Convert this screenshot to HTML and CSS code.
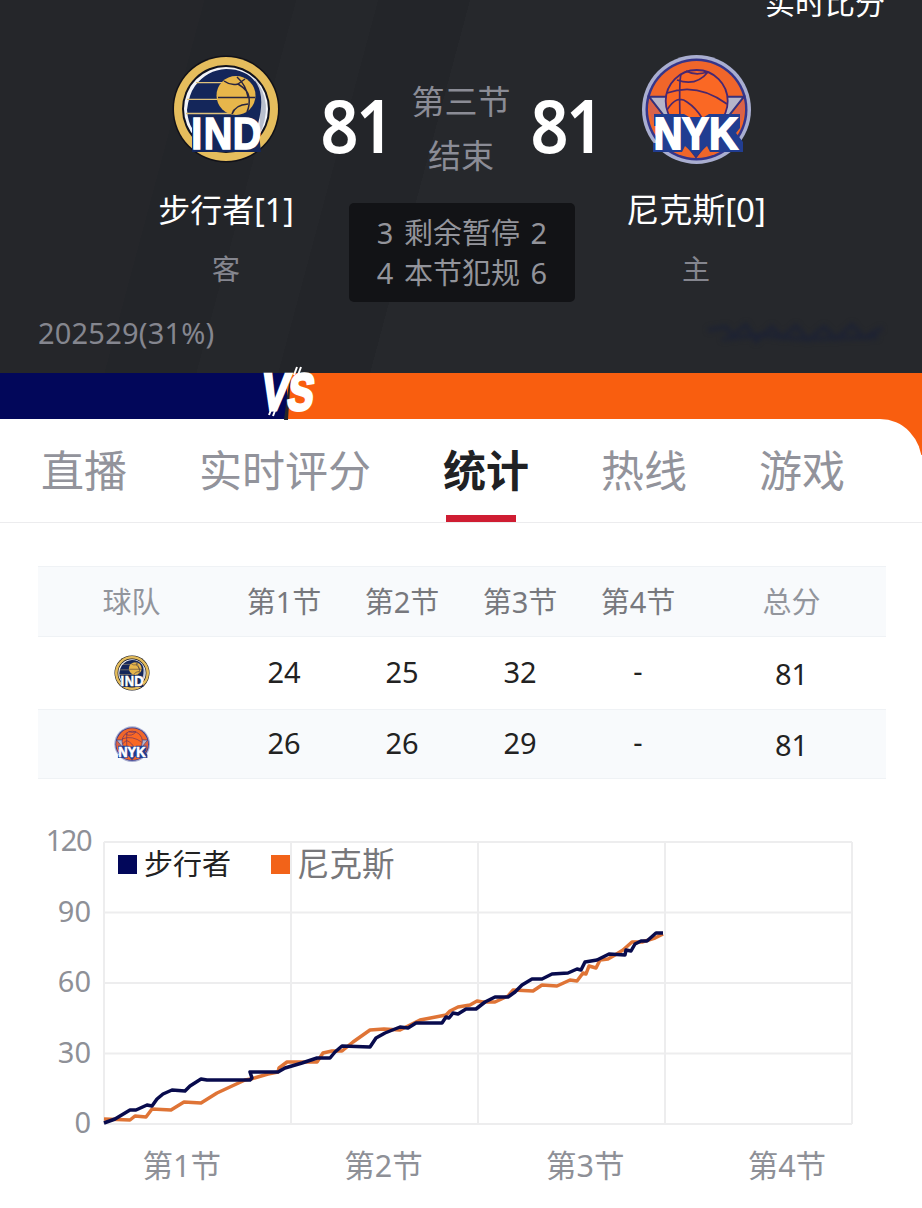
FILE: index.html
```html
<!DOCTYPE html>
<html lang="zh-Hans">
<head>
  <meta charset="UTF-8" />
  <meta name="viewport" content="width=device-width, initial-scale=1.0" />
  <title>步行者 - 尼克斯</title>
  <link rel="stylesheet" href="styles.css">
</head>
<body>
  <header class="header">
    <div class="live">实时比分</div>

    <div class="scoreboard">
      <div class="team away">
        <svg class="logo" viewBox="0 0 110 110">
          <g id="logo-ind">
            <circle cx="55" cy="55" r="53.5" fill="#111118" />
            <circle cx="55" cy="55" r="52" fill="#e5bd5d" />
            <circle cx="55" cy="55" r="44" fill="#10121e" />
            <circle cx="55" cy="55" r="42" fill="#f3f4f8" />
            <path d="M83 24 Q104 48 88 82 Q91 50 83 24Z" fill="#b9bfce" />
            <path d="M55 15 Q76 15 86 30 Q94 44 87 70 L90 98 L21 98 L21 74 Q17 68 16 56 Q18 40 24 32 Q36 16 55 15Z" fill="#14265a" />
            <path d="M25 28.7H60M16 45.3H60M15 59.5H62" stroke="#dfc27c" stroke-width="1.3" />
            <circle cx="65" cy="41.5" r="19.5" fill="#e7b64b" />
            <path d="M47 43.5H84M53 27Q60 32 67 30Q77 36 78 43Q79 51 76 58M67 30L74 25M61 60Q64 51 77 50M66 23Q75 31 77 43" fill="none" stroke="#272440" stroke-width="1.5" />
            <text transform="scale(.88 1)" x="23 37.3 70.3" y="95.5" class="mark">IND</text>
          </g>
        </svg>
        <span class="name">步行者[1]</span>
        <span class="role">客</span>
      </div>
      <div class="score">81</div>
      <div class="period"><span>第三节</span><span>结束</span></div>
      <div class="score">81</div>
      <div class="team home">
        <svg class="logo" viewBox="0 0 110 110">
          <g id="logo-nyk">
            <circle cx="55.5" cy="55.5" r="54.5" fill="#a9aed0" />
            <circle cx="55.5" cy="55.5" r="51" fill="#35358a" />
            <circle cx="55.5" cy="55.5" r="48.5" fill="#f0662a" />
            <path d="M8 42.7H103L55 103Z" fill="#b5b5ca" stroke="#36317c" stroke-width="2" />
            <path d="M8 45L29 72H14Q7 60 8 45M103 45L83 72H98Q105 60 103 45" fill="#d8624b" />
            <path d="M40 80H71L55 103Z" fill="#e46340" stroke="#36317c" stroke-width="1.5" />
            <circle cx="55.7" cy="47" r="31" fill="#fa6824" stroke="#452774" stroke-width="1.8" />
            <path d="M40 20Q38 28 39 64M45 17Q54 22 67 18M36 26Q55 33 67 18M26 39Q56 28 86 50M26 56Q36 40 46 48Q55 54 61 64" fill="none" stroke="#4b286c" stroke-width="1.7" />
            <path d="M13 60H43L48 63H63L68 60H99V74L95 79L102 88V98H69L66 92L55 102L44 92L41 98H12V89H15V72H13Z" fill="#213d91" />
            <text transform="scale(.88 1)" x="14.5 47 77.5" y="95.5" class="mark mark-nyk">NYK</text>
          </g>
        </svg>
        <span class="name">尼克斯[0]</span>
        <span class="role">主</span>
      </div>
      <div class="fouls">
        <span>3 剩余暂停 2</span>
        <span>4 本节犯规 6</span>
      </div>
    </div>

    <div class="votes">
      <span>202529(31%)</span>
      <svg class="smudge" width="192" height="32" viewBox="0 0 192 32">
        <path d="M10 13L28 10L34 19L48 8L58 24L74 10L84 21L98 9L110 23L126 10L138 22L154 8L166 21L184 11M24 22L60 18L104 22L180 20" />
      </svg>
    </div>
  </header>

  <div class="vs-bar">
    <div class="vs-away"></div>
    <svg class="vs" width="64" height="54" viewBox="0 0 64 54">
      <path d="M34 8L31 54H27L30 30Z" fill="#24262b" />
      <g transform="skewX(-8)">
        <text x="9" y="44" textLength="27" lengthAdjust="spacingAndGlyphs">V</text>
        <text x="35" y="44" textLength="26" lengthAdjust="spacingAndGlyphs">S</text>
      </g>
      <path d="M40 1L37 9M44 1L41 9M14 44L12 49M19 42L16 50" stroke="#fff" stroke-width="2" />
    </svg>
  </div>

  <div class="panel-wrap">
    <nav class="tabs">
      <a class="tab">直播</a>
      <a class="tab">实时评分</a>
      <a class="tab active">统计</a>
      <a class="tab">热线</a>
      <a class="tab">游戏</a>
    </nav>
  </div>

  <main>
    <div class="table">
      <div class="row head">
        <span class="muted">球队</span><span>第1节</span><span>第2节</span><span>第3节</span><span>第4节</span><span class="muted">总分</span>
      </div>
      <div class="row">
        <span class="cell-logo"><svg class="logo-sm" viewBox="0 0 110 110"><use href="#logo-ind" /></svg></span>
        <span>24</span><span>25</span><span>32</span><span class="none">-</span><span class="sum">81</span>
      </div>
      <div class="row shade">
        <span class="cell-logo"><svg class="logo-sm" viewBox="0 0 110 110"><use href="#logo-nyk" /></svg></span>
        <span>26</span><span>26</span><span>29</span><span class="none">-</span><span class="sum">81</span>
      </div>
    </div>

    <div class="chart">
      <div class="y-axis">
        <span>120</span><span>90</span><span>60</span><span>30</span><span>0</span>
      </div>
      <div class="plot">
        <svg width="752" height="286" viewBox="-2 -2 752 286">
          <path class="grid" d="M0 0H748M0 70.5H748M0 141H748M0 211.5H748M0 282H748M0 0V282M187 0V282M374 0V282M561 0V282M748 0V282" />
          <polyline class="line nyk" points="0,277 26,278 31,274 42,275 48,267 67,268 80,260 97,261 113,251 141,238 147,237 164,232 174,230 175,226 183,220 213,220 219,211 228,209 238,209 249,200 266,188 280,187 296,188 316,178 342,173 346,169 354,165 366,163 373,159 379,160 391,160 404,154 409,148 429,149 438,143 453,144 466,138 473,139 479,131 482,132 485,124 492,126 496,118 504,117 511,113 519,108 528,100 538,100 551,96 559,92" />
          <polyline class="line ind" points="0,281 11,277 26,268 32,268 43,263 48,264 53,257 59,252 68,248 81,249 86,244 97,237 103,238 146,238 148,236 146,230 174,230 181,226 198,221 213,216 226,216 231,210 238,204 266,205 272,196 281,191 296,185 304,186 312,181 338,181 342,175 345,176 349,171 354,172 362,167 372,167 381,160 391,155 404,155 411,150 418,143 428,137 438,137 448,132 464,131 473,127 477,128 481,120 493,118 505,112 521,113 522,108 527,109 531,102 537,99 543,99 552,91 559,91" />
        </svg>
        <div class="legend">
          <i class="dot ind"></i><span class="l-ind">步行者</span>
          <i class="dot nyk"></i><span class="l-nyk">尼克斯</span>
        </div>
      </div>
    </div>
    <div class="x-axis">
      <span>第1节</span><span>第2节</span><span>第3节</span><span>第4节</span>
    </div>
  </main>
</body>
</html>
```
FILE: styles.css
```css
* { box-sizing: border-box; }
body {
  margin: 0;
  height: 1208px;
  overflow: hidden;
  background: #fff;
  font-family: "Noto Sans", "Noto Sans CJK SC", sans-serif;
  font-size: 29px;
}
svg { display: block; }
.mark {
  font-family: "Liberation Sans", sans-serif;
  font-size: 45px;
  font-weight: bold;
  fill: #fff;
  stroke: #fff;
  stroke-width: 1.6;
}
.mark-nyk { stroke-width: 2; }

/* header */
.header {
  height: 373px;
  overflow: hidden;
  background: linear-gradient(105deg, #25262a 20%, #232529 20% 29%, #25272b 29% 37%, #232529 37% 46%, #26282c 46%);
  color: #fff;
}
.live {
  height: 54px;
  padding-right: 37px;
  margin-top: -14px;
  font-size: 30px;
  line-height: 34px;
  text-align: right;
}
.scoreboard {
  display: grid;
  grid-template-columns: 176px 84px 126px 84px 176px;
  grid-template-rows: 149px 99px;
  margin-top: 14px;
  padding-left: 138px;
  height: 248px;
}
.team {
  grid-row: 1 / 3;
  display: flex;
  flex-direction: column;
  align-items: center;
}
.away { grid-column: 1; }
.home { grid-column: 5; }
.logo {
  width: 110px;
  height: 110px;
}
.name {
  margin-top: 22px;
  font-size: 32px;
  line-height: 48px;
  white-space: nowrap;
}
.home .name { font-size: 33px; }
.role {
  margin-top: 15px;
  font-size: 28px;
  line-height: 40px;
  color: #85868f;
}
.score {
  height: 149px;
  font-size: 74px;
  font-weight: 600;
  line-height: 142px;
  text-align: center;
  letter-spacing: -3px;
  transform: scaleX(.9);
}
.period {
  display: flex;
  flex-direction: column;
  align-items: center;
  padding-top: 21px;
  font-size: 33px;
  line-height: 54px;
  color: #8b8c96;
}
.fouls {
  grid-row: 2;
  grid-column: 2 / 5;
  justify-self: center;
  width: 226px;
  margin-left: 2px;
  padding-top: 10px;
  display: flex;
  flex-direction: column;
  align-items: center;
  border-radius: 5px;
  background: #121316;
  color: #93949b;
  line-height: 40px;
  word-spacing: 3px;
  white-space: pre;
}
.votes {
  display: flex;
  justify-content: space-between;
  align-items: center;
  height: 61px;
  padding: 0 32px 0 38px;
  letter-spacing: .2px;
  color: #85868f;
}
.smudge path {
  fill: none;
  stroke: #1d2233;
  stroke-width: 4;
  filter: blur(2.5px);
}

/* vs bar */
.vs-bar {
  position: relative;
  height: 46px;
  background: #f95e0f;
}
.vs-away {
  width: 287px;
  height: 46px;
  background: #02075a;
}
.vs {
  position: absolute;
  left: 257px;
  top: -7px;
}
.vs text {
  font-family: "Liberation Sans", sans-serif;
  font-size: 52px;
  font-weight: bold;
  fill: #fff;
  stroke: #fff;
  stroke-width: 3;
}

/* tabs */
.panel-wrap {
  background: linear-gradient(#f95e0f 36px, #fff 36px);
}
.tabs {
  display: flex;
  gap: 72px;
  height: 104px;
  padding-left: 41px;
  border-bottom: 1px solid #ececee;
  border-top-right-radius: 42px 44px;
  background: #fff;
}
.tab {
  display: flex;
  flex-direction: column;
  align-items: flex-start;
  font-size: 43px;
  line-height: 103px;
  color: #92939b;
}
.active {
  color: #202124;
  font-weight: bold;
}
.active::after {
  content: "";
  width: 70px;
  height: 7px;
  margin: -7px 0 0 3px;
  background: #cf1d32;
}

/* quarter table */
.table {
  margin: 43px 36px 0 38px;
}
.row {
  display: grid;
  grid-template-columns: 187px repeat(4, 118px) 189px;
  align-items: center;
  height: 72px;
  text-align: center;
  color: #222;
}
.row > span { padding-bottom: 3px; }
.row > .cell-logo {
  display: flex;
  justify-content: center;
  padding: 0;
}
.row > .none { padding-bottom: 6px; }
.row > .sum { padding-bottom: 0; }
.head {
  height: 71px;
  color: #77787d;
}
.head,
.shade {
  background: #f8fafc;
  border-top: 1px solid #eff2f5;
  border-bottom: 1px solid #eff2f5;
}
.shade { height: 70px; }
.muted { color: #92959c; }
.logo-sm {
  width: 36px;
  height: 36px;
}

/* chart */
.chart {
  display: flex;
  height: 286px;
  margin-top: 61px;
}
.y-axis {
  width: 91px;
  margin: -20px 11px 0 0;
  text-align: right;
  color: #8e9097;
}
.y-axis span {
  display: block;
  height: 70.5px;
  line-height: 40px;
}
.y-axis span:first-child { letter-spacing: -1.5px; }
.plot {
  position: relative;
  height: 286px;
}
.grid {
  stroke: #ededee;
  stroke-width: 2;
}
.line {
  fill: none;
  stroke-width: 3.5;
  stroke-linejoin: round;
}
.line.ind { stroke: #080b4d; }
.line.nyk { stroke: #df7436; }
.legend {
  position: absolute;
  left: 16px;
  top: 2px;
  display: flex;
  align-items: center;
  line-height: 44px;
}
.dot {
  width: 19px;
  height: 19px;
  margin-right: 7px;
}
.dot.ind { background: #02075a; }
.dot.nyk { background: #f26319; }
.l-ind {
  margin-right: 40px;
  color: #222;
}
.l-nyk {
  font-size: 32.5px;
  color: #77777a;
}
.x-axis {
  display: grid;
  grid-template-columns: repeat(4, 201.7px);
  margin: 17px 0 0 81px;
  font-size: 30.5px;
  line-height: 44px;
  text-align: center;
  color: #8e9097;
}
```
